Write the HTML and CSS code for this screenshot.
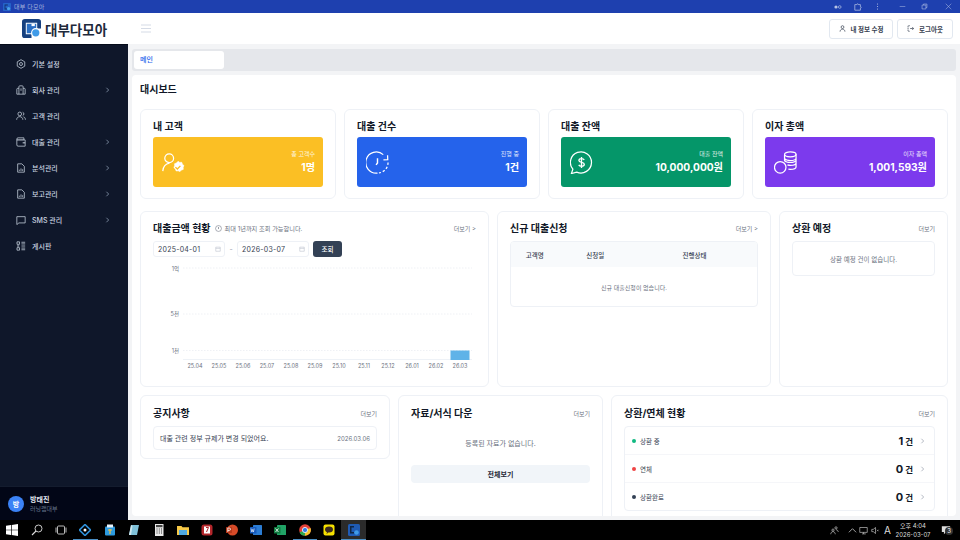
FILE: index.html
```html
<!DOCTYPE html>
<html lang="ko">
<head>
    <meta charset="UTF-8">
    <title>대부다모아</title>
    <link rel="stylesheet" href="styles.css">
</head>
<body>
    <div class="titlebar">
        <div class="titlebar-left">
            <svg class="title-logo" viewBox="0 0 10 10"><rect width="10" height="10" rx="1" fill="#2563c9"/><path d="M2 2h4v1H3v4h2v1H2z" fill="#0f2f6b"/><circle cx="7" cy="7" r="2" fill="#4aa3e8"/></svg>
            <span>대부 다모아</span>
        </div>
        <div class="titlebar-right">
            <svg class="tb-icon tb-key" viewBox="0 0 12 8"><circle cx="3" cy="4" r="2.4" fill="currentColor"/><circle cx="8.6" cy="4" r="2" fill="none" stroke="currentColor"/></svg>
            <svg class="tb-icon tb-ext" viewBox="0 0 10 10"><path d="M1 2h2.500a1 1 0 0 1 2 0H8v2.500a1 1 0 0 1 0 2V9H1z" fill="none" stroke="currentColor" stroke-width=".9"/></svg>
            <svg class="tb-icon tb-dots" viewBox="0 0 4 10"><circle cx="2" cy="1.5" r=".8" fill="currentColor"/><circle cx="2" cy="5" r=".8" fill="currentColor"/><circle cx="2" cy="8.5" r=".8" fill="currentColor"/></svg>
            <svg class="tb-icon tb-min" viewBox="0 0 10 10"><path d="M1 5h8" stroke="currentColor" stroke-width=".7"/></svg>
            <svg class="tb-icon tb-max" viewBox="0 0 10 10"><path d="M1.500 3h5.500v5.500H1.500zM3.500 3V1.500H8.500V6.500H7" fill="none" stroke="currentColor" stroke-width=".8"/></svg>
            <svg class="tb-icon tb-close" viewBox="0 0 10 10"><path d="M1 1l8 8M9 1l-8 8" stroke="currentColor" stroke-width=".7"/></svg>
        </div>
    </div>

    <header class="header">
        <div class="brand">
            <svg class="brand-logo" viewBox="0 0 20 20">
                <path d="M3 0h14a3 3 0 0 1 3 3v7h-4V4H4v12h6v4H3a3 3 0 0 1-3-3V3a3 3 0 0 1 3-3z" fill="#16407f"/>
                <rect x="5" y="5" width="10" height="10" fill="#2a6fc4"/>
                <path d="M10 7.500h3.500V5H10z" fill="#fff"/>
                <circle cx="14.500" cy="14.500" r="5" fill="#fff"/>
                <circle cx="14.500" cy="14.500" r="3.800" fill="#3f9be8"/>
            </svg>
            <span class="brand-name">대부다모아</span>
        </div>
        <svg class="burger" viewBox="0 0 10 9"><path d="M0 1h10M0 4.500h10M0 8h10" stroke="currentColor" stroke-width="1"/></svg>
        <div class="header-actions">
            <button class="head-btn head-btn-edit">
                <svg class="head-icon" viewBox="0 0 10 10"><circle cx="5" cy="3" r="2" fill="none" stroke="currentColor"/><path d="M1.500 9.500c0-2 1.500-3.500 3.500-3.500s3.500 1.500 3.500 3.500" fill="none" stroke="currentColor"/></svg>
                내 정보 수정
            </button>
            <button class="head-btn head-btn-out">
                <svg class="head-icon" viewBox="0 0 10 10"><path d="M4 1H1.500v8H4" fill="none" stroke="currentColor" stroke-dasharray="2 .7"/><path d="M4.500 5h5M7.500 3l2 2-2 2" fill="none" stroke="currentColor"/></svg>
                로그아웃
            </button>
        </div>
    </header>

    <div class="shell">
        <nav class="sidebar">
            <ul class="menu">
                <li class="menu-item">
                    <svg class="menu-icon" viewBox="0 0 12 12"><path d="M6 .8l4.500 2.600v5.200L6 11.200 1.500 8.600V3.400z" fill="none" stroke="currentColor" stroke-width=".9"/><circle cx="6" cy="6" r="1.800" fill="none" stroke="currentColor" stroke-width=".9"/></svg>
                    <span>기본 설정</span>
                </li>
                <li class="menu-item has-sub">
                    <svg class="menu-icon" viewBox="0 0 12 12"><path d="M1 11V5a1 1 0 0 1 1-1h1.500V2a1 1 0 0 1 1-1h3a1 1 0 0 1 1 1v2H10a1 1 0 0 1 1 1v6zM3.500 4v7M8.500 4v7M6 4v3" fill="none" stroke="currentColor" stroke-width=".9"/></svg>
                    <span>회사 관리</span>
                    <svg class="menu-arrow" viewBox="0 0 6 8"><path d="M1.500 1l3 3-3 3" fill="none" stroke="currentColor"/></svg>
                </li>
                <li class="menu-item">
                    <svg class="menu-icon" viewBox="0 0 12 12"><circle cx="4.500" cy="3.500" r="2.200" fill="none" stroke="currentColor" stroke-width=".9"/><path d="M.8 10.500c0-2.200 1.600-3.700 3.700-3.700s3.700 1.500 3.700 3.700M8 1.500a2.100 2.100 0 0 1 0 4M9 7c1.400.4 2.300 1.700 2.300 3.500" fill="none" stroke="currentColor" stroke-width=".9"/></svg>
                    <span>고객 관리</span>
                </li>
                <li class="menu-item has-sub">
                    <svg class="menu-icon" viewBox="0 0 12 12"><path d="M1 2.500A1.500 1.500 0 0 1 2.500 1h7V3.500H11V11H2.500A1.500 1.500 0 0 1 1 9.500z" fill="none" stroke="currentColor" stroke-width=".9"/><path d="M1 3.500h8.500M8 7h3" fill="none" stroke="currentColor" stroke-width="1.200"/></svg>
                    <span>대출 관리</span>
                    <svg class="menu-arrow" viewBox="0 0 6 8"><path d="M1.500 1l3 3-3 3" fill="none" stroke="currentColor"/></svg>
                </li>
                <li class="menu-item has-sub">
                    <svg class="menu-icon" viewBox="0 0 12 12"><path d="M2 1h5l3 3v7H2z" fill="none" stroke="currentColor" stroke-width=".9"/><path d="M4 9.500V8M6 9.500V6.500M8 9.500V7.500" stroke="currentColor" stroke-width=".9"/></svg>
                    <span>분석관리</span>
                    <svg class="menu-arrow" viewBox="0 0 6 8"><path d="M1.500 1l3 3-3 3" fill="none" stroke="currentColor"/></svg>
                </li>
                <li class="menu-item has-sub">
                    <svg class="menu-icon" viewBox="0 0 12 12"><path d="M2 1h5l3 3v7H2z" fill="none" stroke="currentColor" stroke-width=".9"/><path d="M4 9.500V8M6 9.500V6.500M8 9.500V7.500" stroke="currentColor" stroke-width=".9"/></svg>
                    <span>보고관리</span>
                    <svg class="menu-arrow" viewBox="0 0 6 8"><path d="M1.500 1l3 3-3 3" fill="none" stroke="currentColor"/></svg>
                </li>
                <li class="menu-item has-sub">
                    <svg class="menu-icon" viewBox="0 0 12 12"><path d="M1 2h10v7.500H3.500L1 11.500z" fill="none" stroke="currentColor" stroke-width=".9"/></svg>
                    <span>SMS 관리</span>
                    <svg class="menu-arrow" viewBox="0 0 6 8"><path d="M1.500 1l3 3-3 3" fill="none" stroke="currentColor"/></svg>
                </li>
                <li class="menu-item">
                    <svg class="menu-icon" viewBox="0 0 12 12"><path d="M1.200 1h3v3h-3zM1.200 8h3v3h-3zM6.500 1.500H11M6.500 3.500H11M6.500 6H11M6.500 8.500H11M6.500 10.500H11" fill="none" stroke="currentColor" stroke-width=".9"/><circle cx="2.700" cy="6" r=".9" fill="none" stroke="currentColor" stroke-width=".7"/></svg>
                    <span>게시판</span>
                </li>
            </ul>
            <div class="profile">
                <div class="avatar">방</div>
                <div class="profile-text">
                    <div class="profile-name">방태진</div>
                    <div class="profile-org">러닝랩대부</div>
                </div>
            </div>
        </nav>

        <main class="main">
            <div class="tabs">
                <div class="tab-active">메인</div>
            </div>
            <div class="content">
                <h2 class="page-title">대시보드</h2>

                <section class="stats">
                    <div class="card stat-card">
                        <h3 class="card-title">내 고객</h3>
                        <div class="stat-box stat-yellow">
                            <svg class="stat-icon" viewBox="0 0 24 24" fill="none" stroke="currentColor" stroke-width="1.300"><circle cx="7.500" cy="7.500" r="4.600"/><path d="M.8 21c.4-4.500 3-7.800 7-8.400"/><path d="M16.700 10.800l1.800 1.100 2.100-.1.700 2 1.600 1.400-.8 1.900.1 2.100-2 .7-1.400 1.600-2-.8-2.100.1-.7-2-1.600-1.400.8-2-.1-2.100 2-.7z" fill="currentColor" stroke-width=".6"/><path d="M14 16.800l2 2 3.200-3.300" stroke="#fbbf24" stroke-width="1.400"/></svg>
                            <div class="stat-text">
                                <div class="stat-label">총 고객수</div>
                                <div class="stat-value">1명</div>
                            </div>
                        </div>
                    </div>
                    <div class="card stat-card">
                        <h3 class="card-title">대출 건수</h3>
                        <div class="stat-box stat-blue">
                            <svg class="stat-icon" viewBox="0 0 24 24" fill="none" stroke="currentColor" stroke-width="1.300"><path d="M18 3.800A11 11 0 1 0 12 23"/><path d="M23 12a11 11 0 0 1-9.500 10.900" stroke-dasharray="2.500 2"/><path d="M22.500 4.500l.2 4.500-4.500.2"/><path d="M12 7.500v5l-1.500 2" stroke-width="1.500"/></svg>
                            <div class="stat-text">
                                <div class="stat-label">진행 중</div>
                                <div class="stat-value">1건</div>
                            </div>
                        </div>
                    </div>
                    <div class="card stat-card">
                        <h3 class="card-title">대출 잔액</h3>
                        <div class="stat-box stat-green">
                            <svg class="stat-icon" viewBox="0 0 24 24" fill="none" stroke="currentColor" stroke-width="1.300"><path d="M3 19A11 11 0 1 1 7 22l-5.500 1.500z"/><path d="M14.800 9.500c-.4-1-1.500-1.500-2.800-1.500-1.500 0-2.700.7-2.700 1.900 0 2.600 5.600 1.400 5.600 4 0 1.300-1.300 2.100-2.900 2.100-1.300 0-2.400-.5-2.900-1.500M12 6.300v11.400" stroke-width="1.400"/></svg>
                            <div class="stat-text">
                                <div class="stat-label">대출 잔액</div>
                                <div class="stat-value">10,000,000원</div>
                            </div>
                        </div>
                    </div>
                    <div class="card stat-card">
                        <h3 class="card-title">이자 총액</h3>
                        <div class="stat-box stat-purple">
                            <svg class="stat-icon" viewBox="0 0 24 24" fill="none" stroke="currentColor" stroke-width="1.300"><circle cx="6.500" cy="17" r="6"/><ellipse cx="17" cy="3.500" rx="6" ry="2.600"/><path d="M11 4v6c1 1.300 3.300 2 6 2s6-1 6-2.500V3.500M11 8c1 1.300 3.300 2 6 2s6-1 6-2.500M14 14.500c1 .3 2 .5 3 .5 3 0 6-1 6-2.500V9.500M15 19c.7.100 1.300.100 2 .100 3 0 6-1 6-2.500V12.500"/></svg>
                            <div class="stat-text">
                                <div class="stat-label">이자 총액</div>
                                <div class="stat-value">1,001,593원</div>
                            </div>
                        </div>
                    </div>
                </section>

                <section class="row-mid">
                    <div class="card">
                        <div class="card-head">
                            <div class="title-group">
                                <h3 class="card-title">대출금액 현황</h3>
                                <svg class="info-icon" viewBox="0 0 10 10"><circle cx="5" cy="5" r="4.200" fill="none" stroke="currentColor" stroke-width=".8"/><path d="M5 2.800v3" stroke="currentColor"/></svg>
                                <span class="hint">최대 1년까지 조회 가능합니다.</span>
                            </div>
                            <a class="more">더보기 &gt;</a>
                        </div>
                        <div class="date-filter">
                            <div class="date-field">2025-04-01
                                <svg class="cal-icon" viewBox="0 0 8 8"><path d="M1 1.500h6v5.500H1zM1 3.200h6" fill="none" stroke="currentColor" stroke-width=".7"/></svg>
                            </div>
                            <span class="date-sep">-</span>
                            <div class="date-field">2026-03-07
                                <svg class="cal-icon" viewBox="0 0 8 8"><path d="M1 1.500h6v5.500H1zM1 3.200h6" fill="none" stroke="currentColor" stroke-width=".7"/></svg>
                            </div>
                            <button class="search-btn">조회</button>
                        </div>
                        <svg class="chart" viewBox="0 0 323 112">
                            <g class="grid-line">
                                <line x1="30" y1="6" x2="319" y2="6"/>
                                <line x1="30" y1="52" x2="319" y2="52"/>
                                <line x1="30" y1="88.500" x2="319" y2="88.500"/>
                            </g>
                            <g class="y-label">
                                <text x="26" y="8.500">1억</text>
                                <text x="26" y="54">5천</text>
                                <text x="26" y="90.500">1천</text>
                            </g>
                            <rect x="30" y="97" width="289" height="1" fill="#eef2f7"/>
                            <rect x="297.500" y="88.500" width="19" height="9.500" fill="#5fb3e8"/>
                            <g class="x-label">
                                <text x="42" y="106">25.04</text>
                                <text x="66" y="106">25.05</text>
                                <text x="90" y="106">25.06</text>
                                <text x="114" y="106">25.07</text>
                                <text x="138" y="106">25.08</text>
                                <text x="162" y="106">25.09</text>
                                <text x="186" y="106">25.10</text>
                                <text x="211" y="106">25.11</text>
                                <text x="235" y="106">25.12</text>
                                <text x="259" y="106">26.01</text>
                                <text x="283" y="106">26.02</text>
                                <text x="307" y="106">26.03</text>
                            </g>
                        </svg>
                    </div>

                    <div class="card">
                        <div class="card-head">
                            <h3 class="card-title">신규 대출신청</h3>
                            <a class="more">더보기 &gt;</a>
                        </div>
                        <div class="loan-table">
                            <div class="loan-head">
                                <span class="col-name">고객명</span>
                                <span class="col-date">신청일</span>
                                <span class="col-state">진행상태</span>
                            </div>
                            <div class="loan-empty">신규 대출신청이 없습니다.</div>
                        </div>
                    </div>

                    <div class="card">
                        <div class="card-head">
                            <h3 class="card-title">상환 예정</h3>
                            <a class="more">더보기</a>
                        </div>
                        <div class="repay-empty">상환 예정 건이 없습니다.</div>
                    </div>
                </section>

                <section class="row-bottom">
                    <div class="card card-notice">
                        <div class="card-head">
                            <h3 class="card-title">공지사항</h3>
                            <a class="more">더보기</a>
                        </div>
                        <div class="notice-item">
                            <span class="notice-text">대출 관련 정부 규제가 변경 되었어요.</span>
                            <span class="notice-date">2026.03.06</span>
                        </div>
                    </div>

                    <div class="card">
                        <div class="card-head">
                            <h3 class="card-title">자료/서식 다운</h3>
                            <a class="more">더보기</a>
                        </div>
                        <div class="doc-empty">등록된 자료가 없습니다.</div>
                        <button class="all-btn">전체보기</button>
                    </div>

                    <div class="card">
                        <div class="card-head">
                            <h3 class="card-title">상환/연체 현황</h3>
                            <a class="more">더보기</a>
                        </div>
                        <div class="status-list">
                            <div class="status-row">
                                <i class="dot dot-green"></i>
                                <span class="status-label">상환 중</span>
                                <span class="status-num">1</span><span class="status-unit">건</span>
                                <svg class="status-arrow" viewBox="0 0 6 8"><path d="M1.500 1l3 3-3 3" fill="none" stroke="currentColor"/></svg>
                            </div>
                            <div class="status-row">
                                <i class="dot dot-red"></i>
                                <span class="status-label">연체</span>
                                <span class="status-num">0</span><span class="status-unit">건</span>
                                <svg class="status-arrow" viewBox="0 0 6 8"><path d="M1.500 1l3 3-3 3" fill="none" stroke="currentColor"/></svg>
                            </div>
                            <div class="status-row">
                                <i class="dot dot-navy"></i>
                                <span class="status-label">상환완료</span>
                                <span class="status-num">0</span><span class="status-unit">건</span>
                                <svg class="status-arrow" viewBox="0 0 6 8"><path d="M1.500 1l3 3-3 3" fill="none" stroke="currentColor"/></svg>
                            </div>
                        </div>
                    </div>
                </section>
            </div>
        </main>
    </div>

    <footer class="taskbar">
        <div class="task-apps">
            <div class="task-app"><svg viewBox="0 0 12 12"><path d="M0 1.700L5 1v4.700H0zM5.700.9L12 0v5.700H5.700zM0 6.300h5V11l-5-.7zM5.700 6.300H12V12l-6.300-.9z" fill="#fff"/></svg></div>
            <div class="task-app"><svg viewBox="0 0 12 12"><circle cx="7.500" cy="4.500" r="3.500" fill="none" stroke="#ddd" stroke-width=".9"/><path d="M5 7L1 11" stroke="#ddd" stroke-width="1.100"/></svg></div>
            <div class="task-app"><svg viewBox="0 0 12 12"><rect x="2.500" y="2" width="7" height="8" rx="1" fill="none" stroke="#ccc" stroke-width=".9"/><path d="M1 3.500v5M11 3.500v5" stroke="#ccc" stroke-width=".9"/></svg></div>
            <div class="task-app app-line"><svg viewBox="0 0 12 12"><path d="M6 .5L11.500 6 6 11.500.5 6z" fill="none" stroke="#2f8fd8" stroke-width="1.600"/><circle cx="6" cy="6" r="1.500" fill="#fff"/></svg></div>
            <div class="task-app"><svg viewBox="0 0 12 12"><rect x="1" y="2.500" width="10" height="9" rx="1" fill="#2d9be0"/><rect x="3" y=".5" width="6" height="3" fill="#e8f2fa"/><path d="M4 6h4M6 5v5" stroke="#f6c141" stroke-width="1.200"/></svg></div>
            <div class="task-app"><svg viewBox="0 0 12 12"><path d="M3 1h8L9 11H1z" fill="#7fc0d8"/><path d="M3 1l1.500 1L3 11H1z" fill="#cfe7ef"/></svg></div>
            <div class="task-app"><svg viewBox="0 0 12 12"><rect x="2" y="0" width="8.500" height="12" fill="#e8e8e8"/><rect x="3" y="1" width="6.500" height="2.200" fill="#444"/><path d="M3.500 5h1M5.800 5h1M8 5h1M3.500 7h1M5.800 7h1M8 7h1M3.500 9h1M5.800 9h1M8 9h1" stroke="#333"/></svg></div>
            <div class="task-app"><svg viewBox="0 0 12 12"><path d="M0 2h4.500l1 1.200H12V11H0z" fill="#f7c948"/><rect x="2" y="6" width="8" height="5" fill="#4fa8e0"/></svg></div>
            <div class="task-app"><svg viewBox="0 0 12 12"><rect x=".5" y=".5" width="11" height="11" rx="2.500" fill="#b3262b"/><rect x="3" y="2.500" width="6" height="7" fill="#fff"/><path d="M5 3.500h2.500L5.500 8" fill="none" stroke="#b3262b"/></svg></div>
            <div class="task-app"><svg viewBox="0 0 12 12"><circle cx="6.500" cy="6" r="5.500" fill="#d64a28"/><rect x="0" y="3" width="6" height="6" rx=".6" fill="#b7381a"/><path d="M1.800 8V4h1.500a1.200 1.200 0 0 1 0 2.400H1.800" fill="none" stroke="#fff" stroke-width=".8"/></svg></div>
            <div class="task-app"><svg viewBox="0 0 12 12"><rect x="3" y="1" width="9" height="10" rx=".6" fill="#2b7cd3"/><rect x="0" y="3" width="6.500" height="6.500" rx=".6" fill="#185abd"/><path d="M1 4.500l.8 3.500.8-2.500.8 2.500.8-3.500" fill="none" stroke="#fff" stroke-width=".6"/></svg></div>
            <div class="task-app"><svg viewBox="0 0 12 12"><rect x="3" y="1" width="9" height="10" rx=".6" fill="#21a366"/><rect x="0" y="3" width="6.500" height="6.500" rx=".6" fill="#107c41"/><path d="M1.500 4.500l3 3.500M4.500 4.500l-3 3.500" stroke="#fff" stroke-width=".8"/></svg></div>
            <div class="task-app app-line"><svg viewBox="0 0 12 12"><circle cx="6" cy="6" r="5.800" fill="#e3423a"/><path d="M6 6L.5 8.500A5.800 5.800 0 0 0 6 11.800z" fill="#2fa74f"/><path d="M6 6l5.500-2a5.800 5.800 0 0 1-5.500 7.800z" fill="#f6c42f"/><circle cx="6" cy="6" r="2.600" fill="#2f7de8" stroke="#fff" stroke-width=".8"/></svg></div>
            <div class="task-app"><svg viewBox="0 0 12 12"><rect x=".5" y=".5" width="11" height="11" rx="2" fill="#f7e100"/><ellipse cx="6" cy="5.500" rx="4" ry="3" fill="#3b2a20"/><path d="M4 8l-.5 2 2-1.500" fill="#3b2a20"/></svg></div>
            <div class="task-app task-active"><svg viewBox="0 0 12 12"><rect width="12" height="12" rx="1.500" fill="#1f5bb5"/><path d="M2 2h4v1.500H3.500V8H6v1.500H2z" fill="#0f2647"/><circle cx="8.500" cy="8.500" r="2.300" fill="#3f9be8"/></svg></div>
        </div>
        <div class="tray">
            <svg class="tray-icon tray-people" viewBox="0 0 12 12"><circle cx="4" cy="5.500" r="1.500" fill="none" stroke="#ddd" stroke-width=".8"/><circle cx="8" cy="2.500" r="1.500" fill="none" stroke="#ddd" stroke-width=".8"/><path d="M1 11c0-2 1.300-3.500 3-3.500S7 9 7 11M8 5c1.500 0 3 1.300 3 3" fill="none" stroke="#ddd" stroke-width=".8"/></svg>
            <svg class="tray-icon tray-caret" viewBox="0 0 10 10"><path d="M1 7l4-4 4 4" fill="none" stroke="#ddd" stroke-width=".8"/></svg>
            <svg class="tray-icon tray-net" viewBox="0 0 12 12"><path d="M1 2h10v6.500H1zM4 10.500h5M6 8.500v2" fill="none" stroke="#ddd" stroke-width=".8"/></svg>
            <svg class="tray-icon tray-vol" viewBox="0 0 12 12"><path d="M1 4.500h2L6 2v8L3 7.500H1z" fill="none" stroke="#ddd" stroke-width=".8"/><path d="M8 5l2 2M10 5l-2 2" stroke="#ddd" stroke-width=".7"/></svg>
            <span class="tray-lang">A</span>
            <div class="clock">
                <div>오후 4:04</div>
                <div>2026-03-07</div>
            </div>
            <div class="notify">
                <svg class="notify-icon" viewBox="0 0 12 12"><path d="M1 1.500h10v7H6L3.500 11V8.500H1z" fill="#ddd"/></svg>
                <span class="notify-badge">3</span>
            </div>
        </div>
    </footer>
</body>
</html>
```

FILE: styles.css
```css
* {
    margin: 0;
    padding: 0;
    box-sizing: border-box;
    font-family: 'Inter', 'Noto Sans CJK KR', sans-serif;
}

html, body {
    height: 540px;
    overflow: hidden;
}

body {
    display: flex;
    flex-direction: column;
    background: #000;
}

svg {
    display: block;
    flex-shrink: 0;
}

/* window title bar */
.titlebar {
    height: 13px;
    background: #1e40af;
    color: #a5b4dc;
    display: flex;
    align-items: center;
    justify-content: space-between;
    padding-left: 3px;
}

.titlebar-left {
    display: flex;
    align-items: center;
    gap: 3px;
    font-size: 6px;
    letter-spacing: 0.2px;
}

.title-logo {
    width: 8px;
    height: 8px;
}

.titlebar-right {
    display: flex;
    align-items: center;
}

.tb-icon {
    color: #b8c4e6;
}

.tb-key { width: 8px; height: 6px; margin-right: 12px; }
.tb-ext { width: 8px; height: 8px; margin-right: 14px; }
.tb-dots { width: 3px; height: 7px; margin-right: 20px; }
.tb-min { width: 7px; height: 7px; margin-right: 15px; }
.tb-max { width: 7px; height: 7px; margin-right: 17px; }
.tb-close { width: 7px; height: 7px; margin-right: 8px; }

/* header */
.header {
    height: 31px;
    background: white;
    display: flex;
    align-items: center;
    padding: 0 7px 0 22px;
}

.brand {
    width: 119px;
    display: flex;
    align-items: center;
    gap: 4px;
}

.brand-logo {
    width: 19px;
    height: 19px;
}

.brand-name {
    font-size: 13.5px;
    font-weight: 700;
    color: #1e293b;
}

.burger {
    width: 10px;
    height: 9px;
    color: #d5dbe6;
}

.header-actions {
    margin-left: auto;
    display: flex;
    gap: 4px;
}

.head-btn {
    height: 20px;
    background: white;
    border: 1px solid #e2e8f0;
    border-radius: 3px;
    display: flex;
    align-items: center;
    justify-content: center;
    gap: 5px;
    font-size: 6.5px;
    font-weight: 700;
    color: #374151;
}

.head-btn-edit { width: 64px; }
.head-btn-out { width: 56px; }

.head-icon {
    width: 7px;
    height: 7px;
}

/* layout */
.shell {
    height: 476px;
    display: flex;
}

.sidebar {
    width: 128px;
    background: #0f172a;
    display: flex;
    flex-direction: column;
    border-top: 1px solid #060c1a;
}

.menu {
    list-style: none;
    padding-top: 6px;
    flex: 1;
}

.menu-item {
    height: 26px;
    display: flex;
    align-items: center;
    padding: 0 17px 0 16px;
    color: #cbd5e1;
    font-size: 7px;
    font-weight: 500;
}

.menu-icon {
    width: 10px;
    height: 10px;
    margin-right: 6px;
}

.menu-arrow {
    width: 5px;
    height: 6px;
    margin-left: auto;
    color: #94a3b8;
    margin-right: 1px;
}

.profile {
    height: 34px;
    background: #020617;
    border-top: 1px solid #141c2e;
    display: flex;
    align-items: center;
    gap: 6px;
    padding-left: 8px;
}

.avatar {
    width: 16px;
    height: 16px;
    border-radius: 50%;
    background: #3b82f6;
    color: white;
    font-size: 7px;
    font-weight: 700;
    display: flex;
    align-items: center;
    justify-content: center;
}

.profile-name {
    color: #e2e8f0;
    font-size: 7px;
    font-weight: 700;
    line-height: 9px;
}

.profile-org {
    color: #64748b;
    font-size: 6px;
    line-height: 9px;
}

.main {
    flex: 1;
    background: #f3f4f6;
    padding: 5px 4px 4px 4px;
    display: flex;
    flex-direction: column;
    gap: 4px;
    min-width: 0;
}

.tabs {
    height: 22px;
    background: #e5e7eb;
    border-radius: 3px;
    padding: 2px;
    flex-shrink: 0;
}

.tab-active {
    width: 90px;
    height: 18px;
    background: white;
    border-radius: 3px;
    color: #2563eb;
    font-size: 7px;
    font-weight: 500;
    line-height: 18px;
    padding-left: 6px;
}

.content {
    flex: 1;
    background: white;
    border-radius: 4px;
    padding: 8px;
    overflow: hidden;
}

.page-title {
    font-size: 10px;
    font-weight: 700;
    color: #111827;
    line-height: 13px;
    margin-bottom: 13px;
}

.card {
    background: white;
    border: 1px solid #eef1f6;
    border-radius: 6px;
    padding: 9px 12px 12px;
}

.card-head {
    display: flex;
    align-items: center;
    justify-content: space-between;
    height: 14px;
    margin-bottom: 6px;
}

.card-title {
    font-size: 10px;
    font-weight: 700;
    color: #111827;
    line-height: 14px;
}

.more {
    font-size: 6px;
    color: #6b7280;
}

/* stat cards */
.stats {
    display: grid;
    grid-template-columns: repeat(4, 1fr);
    gap: 8px;
    margin-bottom: 12px;
}

.stat-card {
    height: 90px;
}

.stat-card .card-title {
    margin-bottom: 4px;
}

.stat-box {
    height: 50px;
    border-radius: 3px;
    display: flex;
    align-items: center;
    justify-content: space-between;
    padding: 0 8px 0 9px;
    color: white;
}

.stat-yellow { background: #fbbf24; }
.stat-blue { background: #2563eb; }
.stat-green { background: #059669; }
.stat-purple { background: #7c3aed; }

.stat-icon {
    width: 23px;
    height: 23px;
}

.stat-text {
    text-align: right;
}

.stat-label {
    font-size: 6px;
    line-height: 9px;
    opacity: 0.85;
    margin-bottom: 2px;
    margin-top: -1px;
}

.stat-value {
    font-size: 10.2px;
    font-weight: 700;
    line-height: 14px;
}

/* chart row */
.row-mid {
    display: grid;
    grid-template-columns: 349px 274px 169px;
    gap: 8px;
    height: 172px;
    margin-bottom: 12px;
}

.title-group {
    display: flex;
    align-items: center;
}

.info-icon {
    width: 7px;
    height: 7px;
    margin: 0 3px 0 4px;
    color: #6b7280;
}

.hint {
    font-size: 6.2px;
    color: #6b7280;
}

.date-filter {
    display: flex;
    align-items: center;
    margin-bottom: 5px;
}

.date-field {
    width: 72px;
    height: 16px;
    border: 1px solid #eef1f6;
    border-radius: 3px;
    font-size: 7px;
    color: #374151;
    display: flex;
    align-items: center;
    justify-content: space-between;
    padding: 0 3px 0 4px;
    letter-spacing: 0.25px;
}

.date-sep {
    width: 12px;
    text-align: center;
    font-size: 7px;
    color: #9ca3af;
}

.cal-icon {
    width: 6px;
    height: 6px;
    color: #b6bcc7;
}

.search-btn {
    width: 29px;
    height: 16px;
    margin-left: 4px;
    background: #334155;
    border: none;
    border-radius: 3px;
    color: white;
    font-size: 6.5px;
    font-weight: 500;
}

.chart {
    width: 323px;
    height: 112px;
}

.grid-line line {
    stroke: #e8ebf0;
    stroke-width: 0.7;
    stroke-dasharray: 1.500 1.500;
}

.y-label text {
    font-size: 5.5px;
    fill: #6b7280;
    text-anchor: end;
}

.x-label text {
    font-size: 5.5px;
    fill: #6b7280;
    text-anchor: middle;
}

/* loan table */
.loan-table {
    border: 1px solid #eef1f6;
    border-radius: 4px;
    height: 66px;
    overflow: hidden;
}

.loan-head {
    height: 25px;
    background: #f8fafc;
    display: flex;
    align-items: center;
    font-size: 6.5px;
    font-weight: 500;
    color: #374151;
    text-align: center;
}

.col-name { width: 48px; }
.col-date { width: 74px; }
.col-state { width: 126px; }

.loan-empty {
    height: 40px;
    display: flex;
    align-items: center;
    justify-content: center;
    font-size: 6px;
    color: #6b7280;
}

.repay-empty {
    border: 1px solid #eef1f6;
    border-radius: 4px;
    height: 35px;
    display: flex;
    align-items: center;
    justify-content: center;
    font-size: 6.5px;
    color: #6b7280;
}

/* bottom row */
.row-bottom {
    display: grid;
    grid-template-columns: 250px 205px 337px;
    column-gap: 8px;
    align-items: start;
}

.row-bottom .card {
    height: 150px;
}

.row-bottom .card-notice {
    height: 64px;
}

.row-bottom .card-head {
    margin-top: 1px;
    margin-bottom: 6px;
}

.notice-item {
    height: 24px;
    border: 1px solid #eef1f6;
    border-radius: 4px;
    display: flex;
    align-items: center;
    justify-content: space-between;
    padding: 0 6px;
}

.notice-text {
    font-size: 7px;
    color: #374151;
}

.notice-date {
    font-size: 6px;
    color: #6b7280;
}

.doc-empty {
    height: 34px;
    display: flex;
    align-items: center;
    justify-content: center;
    font-size: 7px;
    color: #6b7280;
}

.all-btn {
    width: 179px;
    height: 18px;
    margin-top: 5px;
    background: #f1f5f9;
    border: none;
    border-radius: 4px;
    font-size: 7px;
    font-weight: 700;
    color: #1f2937;
}

.status-list {
    border: 1px solid #eef1f6;
    border-radius: 4px;
}

.status-row {
    height: 28px;
    display: flex;
    align-items: center;
    padding: 0 9px 0 7px;
    border-bottom: 1px solid #f5f6f9;
}

.status-row:last-child {
    border-bottom: none;
    height: 27px;
}

.dot {
    width: 4px;
    height: 4px;
    border-radius: 50%;
    margin-right: 4px;
}

.dot-green { background: #10b981; }
.dot-red { background: #ef4444; }
.dot-navy { background: #334155; }

.status-label {
    font-size: 6.5px;
    color: #374151;
    margin-right: auto;
}

.status-num {
    font-size: 11px;
    font-weight: 700;
    color: #111827;
    margin-right: 2px;
}

.status-unit {
    font-size: 8.5px;
    font-weight: 700;
    color: #111827;
}

.status-arrow {
    width: 5px;
    height: 6px;
    margin-left: 7px;
    color: #9ca3af;
}

/* windows taskbar */
.taskbar {
    height: 20px;
    background: #000;
    display: flex;
    align-items: center;
    justify-content: space-between;
}

.task-apps {
    display: flex;
    height: 100%;
}

.task-app {
    width: 24.400px;
    height: 20px;
    display: flex;
    align-items: center;
    justify-content: center;
}

.task-app svg {
    width: 12px;
    height: 12px;
}

.app-line {
    border-bottom: 1px solid #4b8fc4;
}

.task-active {
    background: #2b2b2b;
    border-bottom: 1px solid #4b8fc4;
}

.tray {
    display: flex;
    align-items: center;
    height: 100%;
    color: #ddd;
}

.tray-icon {
    width: 9px;
    height: 9px;
}

.tray-people { margin-right: 9px; }
.tray-caret { margin-right: 2px; }
.tray-net { margin-right: 3px; }
.tray-vol { margin-right: 2px; }

.tray-lang {
    font-size: 10px;
    width: 11px;
    text-align: center;
    margin-right: 2px;
}

.clock {
    width: 36px;
    text-align: center;
    font-size: 6px;
    line-height: 9px;
    white-space: nowrap;
}

.notify {
    width: 13px;
    margin-left: 10px;
    margin-right: 6px;
    display: flex;
    align-items: center;
    position: relative;
}

.notify-icon {
    width: 10px;
    height: 10px;
}

.notify-badge {
    position: absolute;
    left: 4px;
    top: 2px;
    width: 8px;
    height: 8px;
    border-radius: 50%;
    background: #333;
    color: white;
    font-size: 6px;
    line-height: 8px;
    text-align: center;
}
```
